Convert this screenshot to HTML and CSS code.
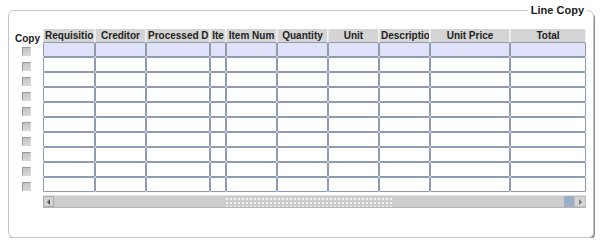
FILE: index.html
```html
<!DOCTYPE html>
<html lang="en">
<head>
  <meta charset="UTF-8">
  <title>Line Copy</title>
  <link rel="stylesheet" href="styles.css">
</head>
<body>

  <div class="frame">
    <span class="frame-title">Line Copy</span>

    <div class="block">
      <div class="copy-col">
        <div class="copy-head"><span>Copy</span></div>
        <div class="copy-cell"><span class="check"></span></div>
        <div class="copy-cell"><span class="check"></span></div>
        <div class="copy-cell"><span class="check"></span></div>
        <div class="copy-cell"><span class="check"></span></div>
        <div class="copy-cell"><span class="check"></span></div>
        <div class="copy-cell"><span class="check"></span></div>
        <div class="copy-cell"><span class="check"></span></div>
        <div class="copy-cell"><span class="check"></span></div>
        <div class="copy-cell"><span class="check"></span></div>
        <div class="copy-cell"><span class="check"></span></div>
      </div>

      <div class="table-area">
        <div class="grid" id="grid">
          <div class="th">Requisitio</div>
          <div class="th">Creditor</div>
          <div class="th">Processed D</div>
          <div class="th">Ite</div>
          <div class="th">Item Num</div>
          <div class="th">Quantity</div>
          <div class="th">Unit</div>
          <div class="th">Descriptio</div>
          <div class="th">Unit Price</div>
          <div class="th">Total</div>
        </div>

        <div class="hscroll">
          <div class="sb-btn sb-left"></div>
          <div class="sb-gap"></div>
          <div class="sb-grip"></div>
          <div class="sb-fill"></div>
          <div class="sb-thumb"></div>
          <div class="sb-btn sb-right"></div>
        </div>
      </div>
    </div>
  </div>

  <script>
    // 10 empty record rows, the first one is the current record
    const grid = document.getElementById("grid");
    for (let r = 0; r < 10; r++) {
      for (let c = 0; c < 10; c++) {
        const cell = document.createElement("div");
        cell.className = r === 0 ? "td current" : "td";
        grid.appendChild(cell);
      }
    }
  </script>

</body>
</html>
```

FILE: styles.css
```css
body {
  margin: 0;
  background: #fff;
  font-family: 'Liberation Sans', Arial, sans-serif;
  color: #1a1a1a;
}
.frame {
  position: relative;
  margin: 10px 0 0 8px;
  width: 584px;
  height: 226px;
  border: 1px solid #c3c6cc;
  border-radius: 6px;
  box-shadow: 1px 2px 0 #8c8c8c;
}
.frame-title {
  position: absolute;
  top: -7px;
  right: 6px;
  padding: 0 3px;
  background: #fff;
  font-size: 11px;
  font-weight: bold;
  line-height: 13px;
}
.block {
  display: flex;
  padding-top: 18px;
}
.copy-col {
  width: 34px;
}
.copy-head {
  height: 13px;
  font-size: 10px;
  font-weight: bold;
  text-align: center;
}
.copy-head span {
  display: block;
  padding: 4px 0 0 3px;
  line-height: 12px;
}
.copy-cell {
  height: 15px;
  display: flex;
  justify-content: center;
  align-items: flex-start;
}
.check {
  width: 7px;
  height: 7px;
  margin: 5px 0 0 0;
  border: 1px solid #9a9a9a;
  border-right-color: #d8d8d8;
  border-bottom-color: #d8d8d8;
  background: linear-gradient(#c4c4c4, #d6d6d6);
}
.table-area {
  width: 543px;
}
.grid {
  display: grid;
  grid-template-columns: 52px 51px 64px 16px 51px 51px 51px 51px 80px 76px;
  grid-auto-rows: 15px;
  grid-template-rows: 13px;
}
.th {
  background: #d4d4d4;
  border-right: 1px solid #f2f2f2;
  border-left: 1px solid #e6e6e6;
  font-size: 10px;
  font-weight: bold;
  line-height: 13px;
  text-align: center;
  white-space: nowrap;
  overflow: hidden;
  padding: 0 1px;
  color: #222;
}
.td {
  border: 1px solid #8e9bb0;
  border-radius: 1px;
  background: #fff;
}
.td.current {
  background: #dfe2f8;
}
.hscroll {
  display: flex;
  height: 11px;
  margin-top: 3px;
  background: #cdcdcd;
  border-top: 1px solid #e2e2e2;
  border-bottom: 1px solid #b4b4b4;
}
.sb-btn {
  width: 11px;
  background: #d4d4d4;
  border: 1px solid #a9a9a9;
  box-sizing: border-box;
  display: flex;
  align-items: center;
  justify-content: center;
}
.sb-btn::before {
  content: "";
  border-top: 3px solid transparent;
  border-bottom: 3px solid transparent;
}
.sb-left::before {
  border-right: 3px solid #555;
}
.sb-right {
  width: 12px;
  border-color: #bdbdbd;
}
.sb-right::before {
  border-left: 3px solid #777;
}
.sb-gap {
  width: 171px;
}
.sb-grip {
  width: 167px;
  background-image: radial-gradient(circle, #f2f2f2 0.8px, transparent 1px);
  background-size: 4px 4px;
  background-position: 0 1px;
}
.sb-fill {
  flex: 1;
}
.sb-thumb {
  width: 10px;
  background: #9eadc6;
}
```
